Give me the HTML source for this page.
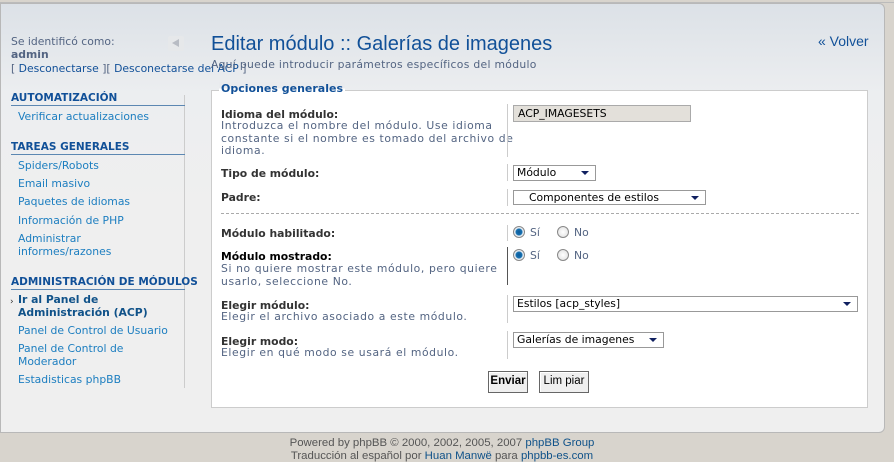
<!DOCTYPE html>
<html><head><meta charset="utf-8"><style>
*{margin:0;padding:0;box-sizing:border-box}
body{width:894px;height:460px;overflow:hidden;background:#d8d4cd;font-family:"DejaVu Sans",Verdana,sans-serif;font-size:10.8px;color:#536482;position:relative}
.a{position:absolute;white-space:nowrap}
#panel{position:absolute;left:0;top:3px;width:885px;height:430px;background:linear-gradient(#dce1e7 0,#eceef0 90px,#efefef 200px);border:1px solid #b8b8b8;border-radius:0 6px 6px 0}
.h{color:#115098;font-weight:bold;font-size:10.5px}
.ln{position:absolute;left:11px;width:174px;border-top:1px solid #5c87b2}
.l{color:#1c7ec0}
#box{position:absolute;left:211px;top:90px;width:657px;height:318px;background:#fff;border:1px solid #ccc}
.b{font-weight:bold;color:#333}
.d{color:#536482;line-height:12.5px;letter-spacing:.6px}
.v{position:absolute;left:507px;border-left:1px solid #ccc}
.sel{position:absolute;background:#fff;border:1px solid #999;color:#000;font-size:10.8px;padding-left:3px;line-height:13px}
.sel:after{content:"";position:absolute;right:6px;top:5px;border-left:4px solid transparent;border-right:4px solid transparent;border-top:4px solid #102060}
.r{position:absolute;width:12px;height:12px;border-radius:50%;border:1px solid #888;background:radial-gradient(#fff,#ddd)}
.r.on{background:radial-gradient(#0c5a9a 0,#1670b0 3px,#e8eef4 4px)}
.btn{position:absolute;border:1px solid #666;background:#efefef;color:#000;font-family:"Liberation Sans",sans-serif;font-size:11.5px;text-align:center;line-height:19px;box-shadow:inset 1px 1px #fff}
</style></head><body>
<div class="a" style="left:0;top:0;width:894px;height:3px;border-bottom:1px solid #bbb"></div>
<div id="panel"></div>
<div class="a" style="left:11px;top:35px">Se identificó como:</div>
<div class="a" style="left:11px;top:48px;font-weight:bold">admin</div>
<div class="a" style="left:11px;top:62px">[ <span style="color:#115098">Desconectarse</span> ][ <span style="color:#115098">Desconectarse del ACP</span> ]</div>
<div class="a" style="left:168px;top:36px;width:16px;height:15px;background:#e6e8ea;border-radius:2px"><div style="position:absolute;left:4px;top:3px;border-top:4px solid transparent;border-bottom:4px solid transparent;border-right:7px solid #b8bcc4"></div></div>
<div class="a" style="left:184px;top:95px;height:293px;border-left:1px solid #ccc"></div>
<div class="a h" style="left:11px;top:92px">AUTOMATIZACIÓN</div><div class="ln" style="top:105px"></div>
<div class="a l" style="left:18px;top:110px">Verificar actualizaciones</div>
<div class="a h" style="left:11px;top:141px">TAREAS GENERALES</div><div class="ln" style="top:154px"></div>
<div class="a l" style="left:18px;top:159px">Spiders/Robots</div>
<div class="a l" style="left:18px;top:177px">Email masivo</div>
<div class="a l" style="left:18px;top:195px">Paquetes de idiomas</div>
<div class="a l" style="left:18px;top:214px">Información de PHP</div>
<div class="a l" style="left:18px;top:233px;line-height:12.5px">Administrar<br>informes/razones</div>
<div class="a h" style="left:11px;top:276px">ADMINISTRACIÓN DE MÓDULOS</div><div class="ln" style="top:289px"></div>
<div class="a" style="left:10px;top:297px;color:#333;font-size:9px">›</div>
<div class="a h" style="left:18px;top:294px;line-height:12.5px;color:#105289;font-size:10.8px">Ir al Panel de<br>Administración (ACP)</div>
<div class="a l" style="left:18px;top:324px">Panel de Control de Usuario</div>
<div class="a l" style="left:18px;top:343px;line-height:12.5px">Panel de Control de<br>Moderador</div>
<div class="a l" style="left:18px;top:373px">Estadisticas phpBB</div>

<div class="a" style="left:211px;top:33px;font-family:'Liberation Sans',sans-serif;font-size:20px;color:#115098">Editar módulo :: Galerías de imagenes</div>
<div class="a" style="left:211px;top:58px;font-size:10.8px;color:#536482;letter-spacing:.3px">Aquí puede introducir parámetros específicos del módulo</div>
<div class="a" style="left:818px;top:33px;font-family:'Liberation Sans',sans-serif;font-size:14px;color:#115098">« Volver</div>

<div id="box"></div>
<div class="a" style="left:219px;top:82px;font-weight:bold;font-size:11px;color:#115098;background:linear-gradient(#e9ebee 50%,#fff 50%);padding:0 2px">Opciones generales</div>

<div class="a b" style="left:221px;top:108px">Idioma del módulo:</div>
<div class="a d" style="left:221px;top:120px">Introduzca el nombre del módulo. Use idioma<br>constante si el nombre es tomado del archivo de<br>idioma.</div>
<div class="v" style="top:104px;height:53px"></div>
<div class="a" style="left:513px;top:105px;width:178px;height:17px;background:#e3e0da;border:1px solid #aaa;color:#000;padding:1px 4px;font-size:10.8px">ACP_IMAGESETS</div>

<div class="a b" style="left:221px;top:167px">Tipo de módulo:</div>
<div class="v" style="top:164px;height:17px"></div>
<div class="sel" style="left:513px;top:165px;width:83px;height:16px;line-height:14px">Módulo</div>

<div class="a b" style="left:221px;top:191px">Padre:</div>
<div class="v" style="top:189px;height:17px"></div>
<div class="sel" style="left:513px;top:190px;width:193px;height:15px;padding-left:15px">Componentes de estilos</div>

<div class="a" style="left:221px;top:213px;width:638px;border-top:1px dashed #aaa"></div>

<div class="a b" style="left:221px;top:227px">Módulo habilitado:</div>
<div class="v" style="top:225px;height:16px"></div>
<div class="r on" style="left:513px;top:226px"></div><div class="a" style="left:530px;top:226px">Sí</div>
<div class="r" style="left:557px;top:226px"></div><div class="a" style="left:574px;top:226px">No</div>

<div class="a b" style="left:221px;top:250px;color:#000">Módulo mostrado:</div>
<div class="a d" style="left:221px;top:263px">Si no quiere mostrar este módulo, pero quiere<br>usarlo, seleccione No.</div>
<div class="v" style="top:247px;height:38px;border-color:#555"></div>
<div class="r on" style="left:513px;top:249px"></div><div class="a" style="left:530px;top:249px">Sí</div>
<div class="r" style="left:557px;top:249px"></div><div class="a" style="left:574px;top:249px">No</div>

<div class="a b" style="left:221px;top:299px">Elegir módulo:</div>
<div class="a d" style="left:221px;top:311px">Elegir el archivo asociado a este módulo.</div>
<div class="v" style="top:295px;height:28px"></div>
<div class="sel" style="left:513px;top:296px;width:345px;height:16px;line-height:14px">Estilos [acp_styles]</div>

<div class="a b" style="left:221px;top:335px">Elegir modo:</div>
<div class="a d" style="left:221px;top:347px">Elegir en qué modo se usará el módulo.</div>
<div class="v" style="top:331px;height:28px"></div>
<div class="sel" style="left:513px;top:332px;width:151px;height:16px;line-height:14px">Galerías de imagenes</div>

<div class="btn" style="left:488px;top:371px;width:40px;height:22px;font-weight:bold">Enviar</div>
<div class="btn" style="left:539px;top:371px;width:50px;height:22px">Lim piar</div>

<div class="a" style="left:0;width:884px;top:437px;text-align:center;font-family:'Liberation Sans',sans-serif;font-size:11.4px;line-height:12.5px;color:#555">Powered by phpBB © 2000, 2002, 2005, 2007 <span style="color:#105289">phpBB Group</span><br>Traducción al español por <span style="color:#105289">Huan Manwë</span> para <span style="color:#105289">phpbb-es.com</span></div>
</body></html>
